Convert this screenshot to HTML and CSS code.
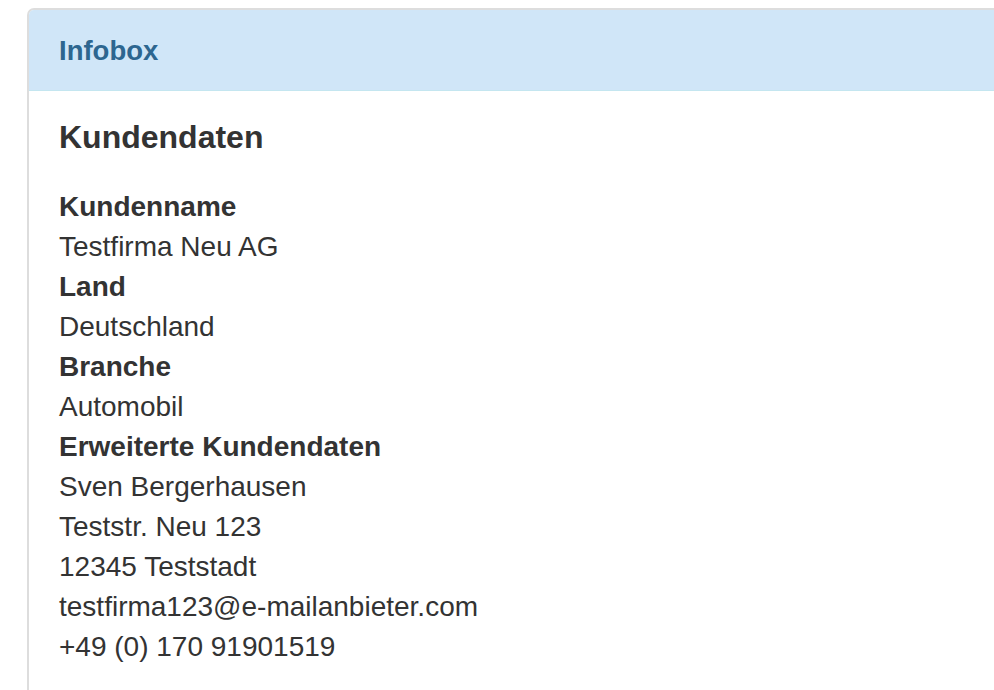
FILE: index.html
```html
<!DOCTYPE html>
<html lang="de">
<head>
    <meta charset="UTF-8">
    <meta name="viewport" content="width=device-width, initial-scale=1.0">
    <title>Infobox</title>
    <link rel="stylesheet" href="styles.css">
</head>
<body>
    <div class="panel panel-info">
        <div class="panel-heading">
            <h3 class="panel-title">Infobox</h3>
        </div>
        <div class="panel-body">
            <h4>Kundendaten</h4>
            <dl class="customer-data">
                <dt>Kundenname</dt>
                <dd>Testfirma Neu AG</dd>
                <dt>Land</dt>
                <dd>Deutschland</dd>
                <dt>Branche</dt>
                <dd>Automobil</dd>
                <dt>Erweiterte Kundendaten</dt>
                <dd>Sven Bergerhausen</dd>
                <dd>Teststr. Neu 123</dd>
                <dd>12345 Teststadt</dd>
                <dd>testfirma123@e-mailanbieter.com</dd>
                <dd>+49 (0) 170 91901519</dd>
            </dl>
        </div>
    </div>
</body>
</html>
```

FILE: styles.css
```css
html, body {
    overflow: hidden;
}

body {
    font-family: "Liberation Sans", Arial, sans-serif;
    color: #333;
    background-color: #fff;
    margin: 8px 0 0 27px;
}

.panel {
    width: 1000px;
    background: #fff;
    border: 2px solid #dddddd;
    border-right: none;
    border-bottom: none;
    border-top-left-radius: 7px;
    min-height: 700px;
}

.panel-heading {
    background-color: #d0e6f8;
    border-bottom: 1px solid #c4e6f0;
    border-top-left-radius: 5px;
    padding: 25px 30px 24px;
}

.panel-title {
    margin: 0;
    font-size: 27.5px;
    line-height: 31px;
    font-weight: bold;
    color: #2d6690;
}

.panel-body {
    padding: 29px 30px;
}

.panel-body h4 {
    margin: 0 0 33px;
    font-size: 32px;
    line-height: 34px;
    font-weight: bold;
    color: #333;
}

.customer-data {
    margin: 0;
    font-size: 28px;
    line-height: 40px;
}

.customer-data dt {
    font-weight: bold;
}

.customer-data dd {
    margin: 0;
}
```
